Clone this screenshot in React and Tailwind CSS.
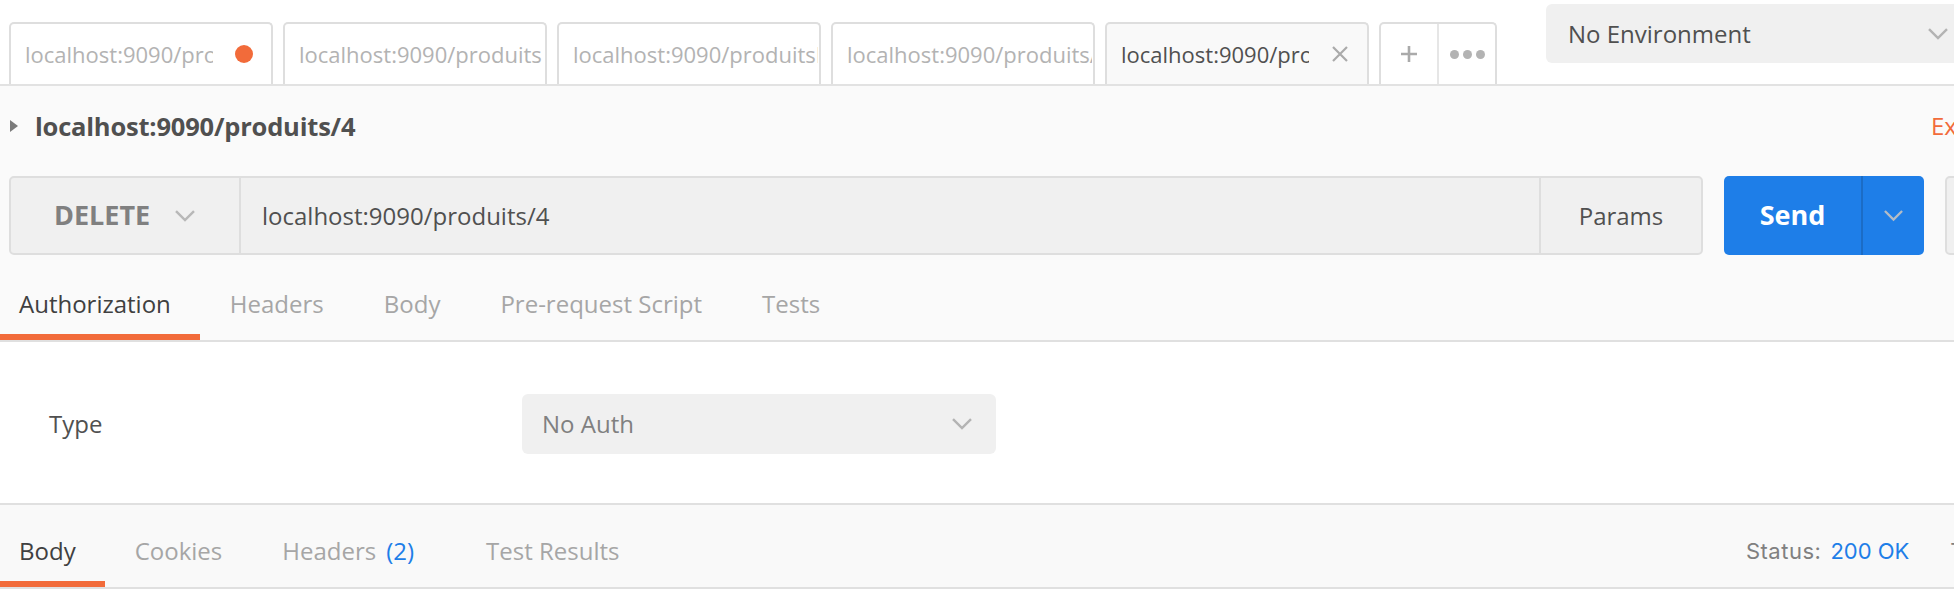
import React from 'react';

const font = { fontFamily: '"Open Sans", "Noto Sans", sans-serif' };

function Chevron({ className = '', color = '#b3b3b3', w = 22 }) {
  return (
    <svg width={w} height={w * 0.6} viewBox="0 0 22 13" className={className}>
      <polyline points="2,2 11,11 20,2" fill="none" stroke={color} strokeWidth="2.4" />
    </svg>
  );
}

function Tab({ label, active, dot }) {
  const marked = active || dot;
  return (
    <div
      className={
        'relative flex items-center w-[264px] h-[62px] border-2 border-b-0 border-[#dedede] rounded-t-[5px] pl-[14px] ' +
        (marked ? 'pr-[14px] ' : 'pr-[1px] ') +
        (active ? 'bg-[#f9f9f9]' : 'bg-white')
      }
    >
      <div
        className={
          'overflow-hidden whitespace-nowrap text-[22px] ' +
          (marked ? 'w-[188px] ' : 'flex-1 ') +
          (active ? 'text-[#505050]' : 'text-[#b3b3b3]')
        }
      >
        {label}
      </div>
      {marked && (
        <div className="flex-1 flex justify-end pr-[4px]">
          {dot && <div className="w-[18px] h-[18px] rounded-full bg-[#f26b3a]" />}
          {active && (
            <svg width="18" height="18" viewBox="0 0 18 18">
              <path d="M2 2 L16 16 M16 2 L2 16" stroke="#aaaaaa" strokeWidth="2.2" />
            </svg>
          )}
        </div>
      )}
    </div>
  );
}

function TopBar() {
  return (
    <div className="flex h-[86px] bg-white border-b-2 border-[#e2e2e2]">
      <div className="flex items-end gap-[10px] pl-[9px]">
        <Tab label="localhost:9090/produits/4" dot />
        <Tab label="localhost:9090/produits" />
        <Tab label="localhost:9090/produitsByName" />
        <Tab label="localhost:9090/produits/" />
        <Tab label="localhost:9090/produits/4" active />
        <div className="flex h-[62px] border-2 border-b-0 border-[#dedede] rounded-t-[5px] bg-white">
          <div className="w-[58px] flex items-center justify-center border-r-2 border-[#e6e6e6]">
            <svg width="18" height="18" viewBox="0 0 18 18">
              <path d="M9 1 V17 M1 9 H17" stroke="#aaaaaa" strokeWidth="2.6" />
            </svg>
          </div>
          <div className="w-[56px] flex items-center justify-center gap-[4px]">
            <span className="w-[9px] h-[9px] rounded-full bg-[#b3b3b3]" />
            <span className="w-[9px] h-[9px] rounded-full bg-[#b3b3b3]" />
            <span className="w-[9px] h-[9px] rounded-full bg-[#b3b3b3]" />
          </div>
        </div>
      </div>
      <div className="w-[2px] bg-[#e2e2e2] ml-[29px]" />
      <div className="ml-[20px] mt-[4px] h-[59px] w-[430px] shrink-0 rounded-[6px] bg-[#f0f0f0] flex items-center pl-[22px] pr-[10px]">
        <span className="text-[24px] text-[#505050] flex-1">No Environment</span>
        <Chevron className="mr-[17px]" />
      </div>
    </div>
  );
}

function TitleRow() {
  return (
    <div className="flex items-center h-[80px] pl-[10px]">
      <svg width="8" height="12" viewBox="0 0 8 12" className="mr-[17px]">
        <polygon points="0,0 8,6 0,12" fill="#7a7a7a" />
      </svg>
      <span className="text-[25.5px] font-bold text-[#505050] tracking-[-0.2px]">localhost:9090/produits/4</span>
      <span className="ml-auto text-[24px] text-[#f26b3a] mr-[-60px] w-[83px]">Examples</span>
    </div>
  );
}

function UrlRow() {
  return (
    <div className="flex h-[79px] mt-[10px] pl-[9px]">
      <div className="flex w-[1694px] shrink-0 border-2 border-[#dedede] rounded-[5px] bg-[#f0f0f0]">
        <div className="w-[230px] flex items-center pl-[43px] border-r-2 border-[#dedede]">
          <span className="text-[27px] font-bold text-[#808080]">DELETE</span>
          <Chevron className="ml-[24px]" color="#b8b8b8" w={22} />
        </div>
        <div className="flex-1 flex items-center pl-[21px] text-[24px] text-[#505050]">
          localhost:9090/produits/4
        </div>
        <div className="w-[162px] flex items-center justify-center border-l-2 border-[#dedede] text-[24px] text-[#505050]">
          Params
        </div>
      </div>
      <div className="ml-[21px] flex w-[200px] shrink-0 rounded-[5px] bg-[#1e7ee8]">
        <div className="w-[139px] flex items-center justify-center text-[27px] font-bold text-white border-r-2 border-[#1b6cc6]">
          Send
        </div>
        <div className="flex-1 flex items-center justify-center">
          <Chevron color="#b4bcc6" w={21} />
        </div>
      </div>
      <div className="ml-[21px] w-[120px] shrink-0 rounded-[5px] border-2 border-[#dedede] bg-[#f0f0f0]" />
    </div>
  );
}

function TabNav({ tabs, active, extra, pads }) {
  return (
    <div className="flex">
      {tabs.map((t, i) => (
        <div
          key={t}
          className={
            'flex items-center h-[66px] border-b-[6px] text-[24px] ' +
            (pads && pads[i] ? pads[i] : i === 0 ? 'pl-[19px] pr-[29px] ' : 'px-[30px] ') +
            ' ' +
            (i === active ? 'border-[#f26b3a] text-[#404040]' : 'border-transparent text-[#a6a6a6]')
          }
        >
          {t}
          {extra && extra[i]}
        </div>
      ))}
    </div>
  );
}

function RequestTabs() {
  return (
    <div className="mt-[19px] border-b-2 border-[#e0e0e0]">
      <TabNav tabs={['Authorization', 'Headers', 'Body', 'Pre-request Script', 'Tests']} active={0} />
    </div>
  );
}

function AuthPanel() {
  return (
    <div className="bg-white h-[161px] flex items-center pt-[2px]">
      <div className="w-[522px] pl-[49px] text-[24px] text-[#505050]">Type</div>
      <div className="w-[474px] h-[60px] rounded-[6px] bg-[#f0f0f0] flex items-center pl-[20px] pr-[23px]">
        <span className="flex-1 text-[24px] text-[#808080]">No Auth</span>
        <Chevron color="#b3b3b3" w={22} />
      </div>
    </div>
  );
}

function ResponseBar() {
  return (
    <div className="flex items-end h-[86px] bg-[#f9f9f9] border-y-2 border-[#e0e0e0]">
      <TabNav
        tabs={['Body', 'Cookies', 'Headers', 'Test Results']}
        active={0}
        pads={[null, null, 'pl-[30px] pr-[42px]', null]}
        extra={[null, null, <span key="c" className="ml-[10px] text-[#1e7ee8]">(2)</span>, null]}
      />
      <div
        className="ml-auto h-[66px] pb-[6px] flex items-center text-[22px] whitespace-nowrap mr-[-48px]"
        style={{ fontFamily: 'Inter, "Liberation Sans", sans-serif' }}
      >
        <span className="text-[#808080] tracking-[0.5px]">Status:</span>
        <span className="ml-[9px] text-[#1e7ee8]">200 OK</span>
        <span className="ml-[41px] text-[#808080]">Time</span>
      </div>
    </div>
  );
}

export default function App() {
  return (
    <div className="w-[1954px] h-[604px] overflow-hidden bg-white" style={font}>
      <TopBar />
      <div className="bg-[#fafafa]">
        <TitleRow />
        <UrlRow />
        <RequestTabs />
      </div>
      <AuthPanel />
      <ResponseBar />
    </div>
  );
}
